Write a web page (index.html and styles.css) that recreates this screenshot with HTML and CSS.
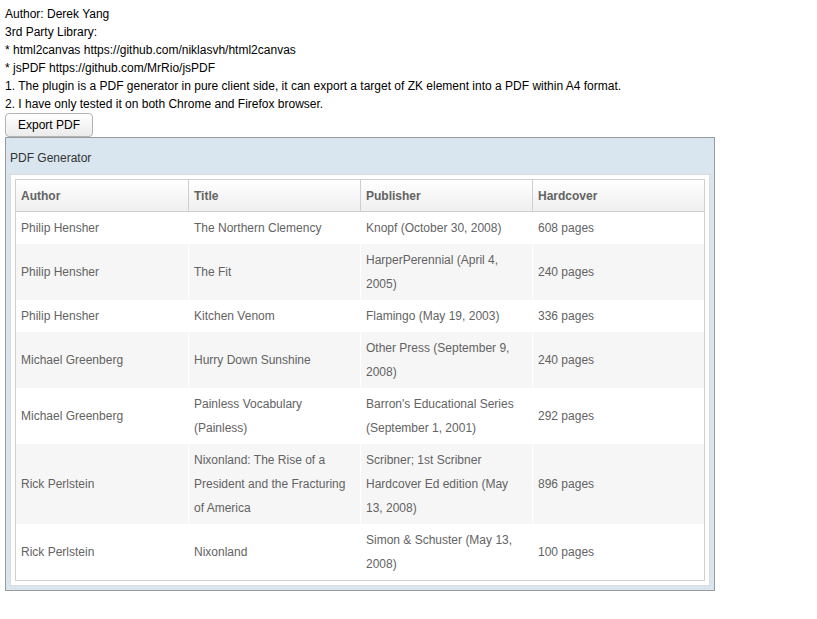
FILE: index.html
```html
<!DOCTYPE html>
<html>
<head>
<meta charset="utf-8">
<link rel="stylesheet" href="styles.css">
</head>
<body>
<div class="intro">
  <div>Author: Derek Yang</div>
  <div>3rd Party Library:</div>
  <div>* html2canvas https://github.com/niklasvh/html2canvas</div>
  <div>* jsPDF https://github.com/MrRio/jsPDF</div>
  <div>1. The plugin is a PDF generator in pure client side, it can export a target of ZK element into a PDF within A4 format.</div>
  <div>2. I have only tested it on both Chrome and Firefox browser.</div>
</div>
<button class="btn">Export PDF</button>
<div class="panel">
  <div class="panel-title">PDF Generator</div>
  <div class="panel-body">
    <div class="panel-inner">
      <table class="grid">
        <thead>
          <tr><th>Author</th><th>Title</th><th>Publisher</th><th>Hardcover</th></tr>
        </thead>
        <tbody>
          <tr><td>Philip Hensher</td><td>The Northern Clemency</td><td>Knopf (October 30, 2008)</td><td>608 pages</td></tr>
          <tr class="odd"><td>Philip Hensher</td><td>The Fit</td><td>HarperPerennial (April 4, 2005)</td><td>240 pages</td></tr>
          <tr><td>Philip Hensher</td><td>Kitchen Venom</td><td>Flamingo (May 19, 2003)</td><td>336 pages</td></tr>
          <tr class="odd"><td>Michael Greenberg</td><td>Hurry Down Sunshine</td><td>Other Press (September 9, 2008)</td><td>240 pages</td></tr>
          <tr><td>Michael Greenberg</td><td>Painless Vocabulary (Painless)</td><td>Barron's Educational Series (September 1, 2001)</td><td>292 pages</td></tr>
          <tr class="odd"><td>Rick Perlstein</td><td>Nixonland: The Rise of a President and the Fracturing of America</td><td>Scribner; 1st Scribner Hardcover Ed edition (May 13, 2008)</td><td>896 pages</td></tr>
          <tr><td>Rick Perlstein</td><td>Nixonland</td><td>Simon &amp; Schuster (May 13, 2008)</td><td>100 pages</td></tr>
        </tbody>
      </table>
    </div>
  </div>
</div>
</body>
</html>
```
FILE: styles.css
```css
html, body {
  margin: 0;
  background: #ffffff;
}
body {
  padding: 5px 5px;
  font-family: "Liberation Sans", Arial, Helvetica, sans-serif;
  font-size: 12px;
  color: #000000;
}
.intro {
  line-height: 18px;
}
.btn {
  display: block;
  box-sizing: border-box;
  height: 24px;
  margin: 0;
  padding: 0 12px;
  font-family: "Liberation Sans", Arial, Helvetica, sans-serif;
  font-size: 12px;
  color: #000000;
  background: linear-gradient(#ffffff, #ebebeb);
  border: 1px solid #b3b3b3;
  border-radius: 4px;
}
.panel {
  box-sizing: border-box;
  width: 710px;
  border: 1px solid #9a9a9a;
  background: #d9e5ef;
}
.panel-title {
  padding: 8px 4px 4px;
  line-height: 24px;
  color: #333333;
}
.panel-body {
  padding: 0 4px 4px;
}
.panel-inner {
  background: #ffffff;
  border: 1px solid #dcdcdc;
  padding: 4px;
}
.grid {
  width: 100%;
  table-layout: fixed;
  border-collapse: separate;
  border-spacing: 0;
  border: 1px solid #cfcfcf;
  color: #636363;
  font-size: 12px;
}
.grid th {
  text-align: left;
  font-weight: bold;
  padding: 4px 5px 3px;
  line-height: 24px;
  background: linear-gradient(#ffffff, #efefef);
  border-bottom: 1px solid #cfcfcf;
  border-left: 1px solid #cfcfcf;
}
.grid td {
  padding: 4px 5px;
  line-height: 24px;
  vertical-align: middle;
  border-left: 1px solid #ffffff;
}
.grid th:first-child,
.grid td:first-child {
  border-left: none;
}
.grid tr.odd td {
  background: #f6f6f6;
}
```
